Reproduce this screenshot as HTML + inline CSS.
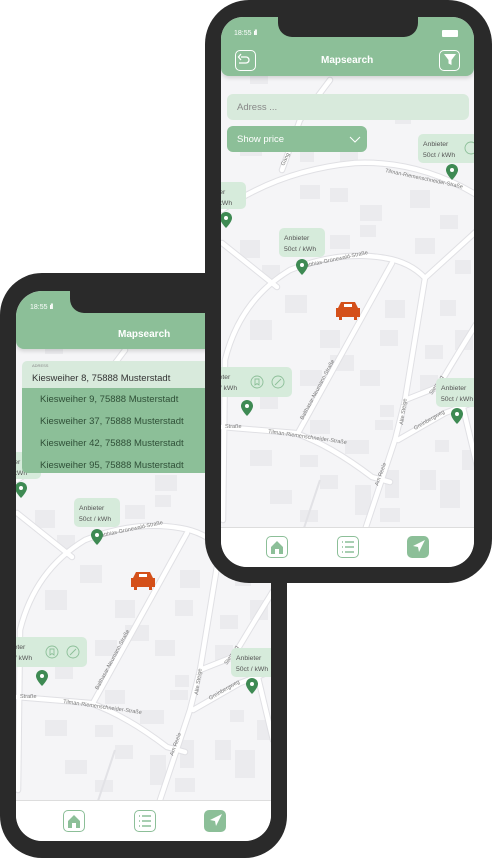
<!DOCTYPE html>
<html><head><meta charset="utf-8"><style>
*{margin:0;padding:0;box-sizing:border-box}
body{width:492px;height:858px;background:#fff;position:relative;overflow:hidden;font-family:"Liberation Sans","DejaVu Sans",sans-serif}
.frame{position:absolute;background:#2a2a2a}
.screen{position:absolute;overflow:hidden;background:#f5f5f7}
.hdr{position:absolute;left:0;top:0;background:#8cbf98;border-radius:0 0 8px 8px;box-shadow:0 2px 4px rgba(0,0,0,.15)}
.title{position:absolute;color:#fff;font-weight:bold;font-size:10px}
.time{position:absolute;color:#fff;font-size:7px}
.nav{position:absolute;left:0;background:#fff;border-top:1px solid #ddd}
.ic{position:absolute;width:22px;height:22px;border:1.3px solid #8cbf98;border-radius:5px;background:#fff}
.ic.f{background:#8cbf98}
</style></head><body>

<!-- FRONT PHONE -->
<div class="frame" style="left:0;top:273px;width:287px;height:585px;border-radius:42px"></div>
<div class="screen" style="left:16px;top:291px;width:255px;height:550px;border-radius:26px 26px 26px 26px">
<svg width="255" height="550" viewBox="221 21 255 550" style="position:absolute;left:0;top:0">
<defs><g id="ra" fill="none" stroke-linecap="round">
<path d="M223 520 L225 360 Q240 300 290 270 Q340 250 385 258 Q410 262 425 278 L480 228"/>
<path d="M222 427 L295 433 Q330 445 372 477 L390 482"/>
<path d="M298 433 L392 263"/>
<path d="M425 278 L405 400 L395 440 L365 530"/>
<path d="M398 440 L445 413 L480 400"/>
<path d="M405 400 L438 387 Q460 350 480 318"/>
<path d="M222 243 L277 287"/>
<path d="M222 210 Q280 170 355 163 Q420 160 480 197"/>
<path d="M282 170 L300 120 L330 80"/>
<path d="M460 395 L478 470"/>
</g></defs>
<g fill="#ebebee">
<rect x="240" y="140" width="22" height="16"/><rect x="300" y="185" width="20" height="14"/><rect x="330" y="188" width="18" height="14"/><rect x="360" y="205" width="22" height="16"/><rect x="410" y="190" width="20" height="18"/><rect x="440" y="215" width="18" height="14"/>
<rect x="240" y="240" width="20" height="18"/><rect x="262" y="265" width="18" height="14"/><rect x="330" y="235" width="20" height="14"/><rect x="360" y="225" width="16" height="12"/><rect x="415" y="238" width="20" height="16"/><rect x="455" y="260" width="16" height="14"/>
<rect x="285" y="295" width="22" height="18"/><rect x="250" y="320" width="22" height="20"/><rect x="320" y="330" width="20" height="18"/><rect x="330" y="355" width="24" height="16"/><rect x="385" y="300" width="20" height="18"/><rect x="380" y="330" width="18" height="16"/><rect x="440" y="300" width="16" height="16"/><rect x="455" y="330" width="18" height="20"/><rect x="425" y="345" width="18" height="14"/>
<rect x="300" y="370" width="22" height="16"/><rect x="260" y="395" width="18" height="14"/><rect x="360" y="370" width="20" height="16"/><rect x="380" y="405" width="14" height="12"/><rect x="375" y="420" width="18" height="10"/><rect x="420" y="375" width="18" height="16"/><rect x="455" y="385" width="16" height="14"/>
<rect x="310" y="420" width="20" height="14"/><rect x="345" y="440" width="24" height="14"/><rect x="250" y="450" width="22" height="16"/><rect x="300" y="455" width="18" height="12"/><rect x="320" y="475" width="18" height="14"/><rect x="270" y="490" width="22" height="14"/><rect x="355" y="485" width="16" height="30"/><rect x="385" y="470" width="14" height="28"/><rect x="420" y="470" width="16" height="20"/><rect x="435" y="440" width="14" height="12"/><rect x="440" y="480" width="20" height="28"/><rect x="462" y="450" width="14" height="20"/><rect x="300" y="510" width="18" height="12"/><rect x="380" y="508" width="20" height="14"/>
<rect x="250" y="70" width="18" height="14"/><rect x="300" y="150" width="14" height="12"/><rect x="340" y="150" width="18" height="12"/><rect x="395" y="110" width="16" height="14"/><rect x="440" y="100" width="18" height="14"/>
</g>
<use href="#ra" stroke="#e0e0e4" stroke-width="6.5"/>
<use href="#ra" stroke="#fff" stroke-width="4.5"/>
<g fill="none" stroke="#e2e2e6" stroke-width="2"><path d="M320 480 L300 540"/></g>
<g font-size="5.5" fill="#777">
<text transform="translate(302,268) rotate(-12)">Matthias-Grünewald-Straße</text>
<text transform="translate(385,172) rotate(12)">Tilman-Riemenschneider-Straße</text>
<text transform="translate(268,433) rotate(8)">Tilman-Riemenschneider-Straße</text>
<text transform="translate(303,420) rotate(-62)">Balthasar-Neumann-Straße</text>
<text transform="translate(403,425) rotate(-82)">Alte Steige</text>
<text transform="translate(378,486) rotate(-70)">Am Reele</text>
<text transform="translate(415,430) rotate(-30)">Greinbergweg</text>
<text transform="translate(432,395) rotate(-58)">Stegweg</text>
<text transform="translate(225,428)">Straße</text>
</g>
<g fill="#d6ebdb">
<rect x="418" y="134" width="60" height="29" rx="5"/><rect x="200" y="182" width="46" height="27" rx="5"/><rect x="279" y="228" width="46" height="29" rx="5"/><rect x="200" y="367" width="92" height="30" rx="5"/><rect x="436" y="378" width="46" height="29" rx="5"/>
</g>
<g font-size="6.8" fill="#555">
<text x="423" y="146">Anbieter</text><text x="423" y="157">50ct / kWh</text>
<text x="284" y="240">Anbieter</text><text x="284" y="251">50ct / kWh</text>
<text x="441" y="390">Anbieter</text><text x="441" y="401">50ct / kWh</text>
<text x="200" y="194">Anbieter</text><text x="200" y="205">50ct / kWh</text>
<text x="205" y="379">Anbieter</text><text x="205" y="390">50ct / kWh</text>
</g>
<g fill="none" stroke="#8cbf98" stroke-width="0.9"><circle cx="257" cy="382" r="6"/><circle cx="278" cy="382" r="6"/><circle cx="471" cy="148" r="6"/><path d="M255 379h4v6l-2-1.5-2 1.5z M275 385l6-6"/></g>
<g fill="#3e8a53">
<path d="M452 164a6 6 0 0 1 6 6c0 4-6 10-6 10s-6-6-6-10a6 6 0 0 1 6-6z"/>
<path d="M226 212a6 6 0 0 1 6 6c0 4-6 10-6 10s-6-6-6-10a6 6 0 0 1 6-6z"/>
<path d="M302 259a6 6 0 0 1 6 6c0 4-6 10-6 10s-6-6-6-10a6 6 0 0 1 6-6z"/>
<path d="M247 400a6 6 0 0 1 6 6c0 4-6 10-6 10s-6-6-6-10a6 6 0 0 1 6-6z"/>
<path d="M457 408a6 6 0 0 1 6 6c0 4-6 10-6 10s-6-6-6-10a6 6 0 0 1 6-6z"/>
</g>
<g fill="#fff"><circle cx="452" cy="170" r="2"/><circle cx="226" cy="218" r="2"/><circle cx="302" cy="265" r="2"/><circle cx="247" cy="406" r="2"/><circle cx="457" cy="414" r="2"/></g>
<g fill="#d4501a"><path d="M341 302h14l3 6h2v9h-3v3h-3v-3h-12v3h-3v-3h-3v-9h2z"/></g>
<rect x="344" y="304" width="8" height="3" fill="#fff"/>
</svg>
<div class="hdr" style="width:255px;height:58px"></div>
<div style="position:absolute;left:54px;top:-2px;width:260px;height:24px;background:#2a2a2a;border-radius:0 0 0 14px"></div>
<div class="time" style="left:14px;top:13px">18:55 <b style="letter-spacing:-1px">ıll</b></div>
<div class="title" style="left:102px;top:38px">Mapsearch</div>
<div style="position:absolute;left:6px;top:70px;width:250px;height:27px;background:#d8eadc;border-radius:5px 5px 0 0"></div>
<div style="position:absolute;left:16px;top:72px;font-size:4px;color:#888">ADRESS</div>
<div style="position:absolute;left:16px;top:82px;font-size:9.5px;color:#333">Kiesweiher 8, 75888 Musterstadt</div>
<div style="position:absolute;left:6px;top:97px;width:250px;height:85px;background:#8cbf98;border-radius:0 0 5px 5px;color:#2f4f37;font-size:9.5px;line-height:22px;padding:1px 0 0 18px">Kiesweiher 9, 75888 Musterstadt<br>Kiesweiher 37, 75888 Musterstadt<br>Kiesweiher 42, 75888 Musterstadt<br>Kiesweiher 95, 75888 Musterstadt</div>
<div class="nav" style="top:509px;width:255px;height:41px"></div>
<div class="ic" style="left:47px;top:519px"></div>
<div class="ic" style="left:118px;top:519px"></div>
<div class="ic f" style="left:188px;top:519px"></div>
<svg width="255" height="41" style="position:absolute;left:0;top:509px"><path d="M52 21l6-6 6 6v7h-4v-5h-4v5h-4z" fill="#8cbf98"/><g stroke="#8cbf98" stroke-width="1.5"><path d="M126 16h9M126 21h9M126 26h9M123 16h1M123 21h1M123 26h1"/></g><path d="M206 14l-12 6 5 1 1 5z" fill="#fff"/></svg>
</div>

<!-- BACK PHONE -->
<div class="frame" style="left:205px;top:0;width:287px;height:583px;border-radius:44px"></div>
<div class="screen" style="left:221px;top:17px;width:253px;height:550px;border-radius:22px 22px 26px 26px">
<svg width="253" height="550" viewBox="221 17 253 550" style="position:absolute;left:0;top:0">
<defs><g id="rb" fill="none" stroke-linecap="round">
<path d="M223 520 L225 360 Q240 300 290 270 Q340 250 385 258 Q410 262 425 278 L480 228"/>
<path d="M222 427 L295 433 Q330 445 372 477 L390 482"/>
<path d="M298 433 L392 263"/>
<path d="M425 278 L405 400 L395 440 L365 530"/>
<path d="M398 440 L445 413 L480 400"/>
<path d="M405 400 L438 387 Q460 350 480 318"/>
<path d="M222 243 L277 287"/>
<path d="M222 210 Q280 170 355 163 Q420 160 480 197"/>
<path d="M282 170 L300 120 L330 80"/>
<path d="M460 395 L478 470"/>
</g></defs>
<g fill="#ebebee">
<rect x="240" y="140" width="22" height="16"/><rect x="300" y="185" width="20" height="14"/><rect x="330" y="188" width="18" height="14"/><rect x="360" y="205" width="22" height="16"/><rect x="410" y="190" width="20" height="18"/><rect x="440" y="215" width="18" height="14"/>
<rect x="240" y="240" width="20" height="18"/><rect x="262" y="265" width="18" height="14"/><rect x="330" y="235" width="20" height="14"/><rect x="360" y="225" width="16" height="12"/><rect x="415" y="238" width="20" height="16"/><rect x="455" y="260" width="16" height="14"/>
<rect x="285" y="295" width="22" height="18"/><rect x="250" y="320" width="22" height="20"/><rect x="320" y="330" width="20" height="18"/><rect x="330" y="355" width="24" height="16"/><rect x="385" y="300" width="20" height="18"/><rect x="380" y="330" width="18" height="16"/><rect x="440" y="300" width="16" height="16"/><rect x="455" y="330" width="18" height="20"/><rect x="425" y="345" width="18" height="14"/>
<rect x="300" y="370" width="22" height="16"/><rect x="260" y="395" width="18" height="14"/><rect x="360" y="370" width="20" height="16"/><rect x="380" y="405" width="14" height="12"/><rect x="375" y="420" width="18" height="10"/><rect x="420" y="375" width="18" height="16"/><rect x="455" y="385" width="16" height="14"/>
<rect x="310" y="420" width="20" height="14"/><rect x="345" y="440" width="24" height="14"/><rect x="250" y="450" width="22" height="16"/><rect x="300" y="455" width="18" height="12"/><rect x="320" y="475" width="18" height="14"/><rect x="270" y="490" width="22" height="14"/><rect x="355" y="485" width="16" height="30"/><rect x="385" y="470" width="14" height="28"/><rect x="420" y="470" width="16" height="20"/><rect x="435" y="440" width="14" height="12"/><rect x="440" y="480" width="20" height="28"/><rect x="462" y="450" width="14" height="20"/><rect x="300" y="510" width="18" height="12"/><rect x="380" y="508" width="20" height="14"/>
<rect x="250" y="70" width="18" height="14"/><rect x="300" y="150" width="14" height="12"/><rect x="340" y="150" width="18" height="12"/><rect x="395" y="110" width="16" height="14"/><rect x="440" y="100" width="18" height="14"/>
</g>
<use href="#rb" stroke="#e0e0e4" stroke-width="6.5"/>
<use href="#rb" stroke="#fff" stroke-width="4.5"/>
<g fill="none" stroke="#e2e2e6" stroke-width="2"><path d="M320 480 L300 540"/></g>
<g font-size="5.5" fill="#777">
<text transform="translate(302,268) rotate(-12)">Matthias-Grünewald-Straße</text>
<text transform="translate(385,172) rotate(12)">Tilman-Riemenschneider-Straße</text>
<text transform="translate(268,433) rotate(8)">Tilman-Riemenschneider-Straße</text>
<text transform="translate(303,420) rotate(-62)">Balthasar-Neumann-Straße</text>
<text transform="translate(403,425) rotate(-82)">Alte Steige</text>
<text transform="translate(378,486) rotate(-70)">Am Reele</text>
<text transform="translate(415,430) rotate(-30)">Greinbergweg</text>
<text transform="translate(432,395) rotate(-58)">Stegweg</text>
<text transform="translate(225,428)">Straße</text>
<text transform="translate(284,166) rotate(-65)">Gang</text>
</g>
<g fill="#d6ebdb">
<rect x="418" y="134" width="60" height="29" rx="5"/><rect x="200" y="182" width="46" height="27" rx="5"/><rect x="279" y="228" width="46" height="29" rx="5"/><rect x="200" y="367" width="92" height="30" rx="5"/><rect x="436" y="378" width="46" height="29" rx="5"/>
</g>
<g font-size="6.8" fill="#555">
<text x="423" y="146">Anbieter</text><text x="423" y="157">50ct / kWh</text>
<text x="284" y="240">Anbieter</text><text x="284" y="251">50ct / kWh</text>
<text x="441" y="390">Anbieter</text><text x="441" y="401">50ct / kWh</text>
<text x="200" y="194">Anbieter</text><text x="200" y="205">50ct / kWh</text>
<text x="205" y="379">Anbieter</text><text x="205" y="390">50ct / kWh</text>
</g>
<g fill="none" stroke="#8cbf98" stroke-width="0.9"><circle cx="257" cy="382" r="6"/><circle cx="278" cy="382" r="6"/><circle cx="471" cy="148" r="6"/><path d="M255 379h4v6l-2-1.5-2 1.5z M275 385l6-6"/></g>
<g fill="#3e8a53">
<path d="M452 164a6 6 0 0 1 6 6c0 4-6 10-6 10s-6-6-6-10a6 6 0 0 1 6-6z"/>
<path d="M226 212a6 6 0 0 1 6 6c0 4-6 10-6 10s-6-6-6-10a6 6 0 0 1 6-6z"/>
<path d="M302 259a6 6 0 0 1 6 6c0 4-6 10-6 10s-6-6-6-10a6 6 0 0 1 6-6z"/>
<path d="M247 400a6 6 0 0 1 6 6c0 4-6 10-6 10s-6-6-6-10a6 6 0 0 1 6-6z"/>
<path d="M457 408a6 6 0 0 1 6 6c0 4-6 10-6 10s-6-6-6-10a6 6 0 0 1 6-6z"/>
</g>
<g fill="#fff"><circle cx="452" cy="170" r="2"/><circle cx="226" cy="218" r="2"/><circle cx="302" cy="265" r="2"/><circle cx="247" cy="406" r="2"/><circle cx="457" cy="414" r="2"/></g>
<g fill="#d4501a"><path d="M341 302h14l3 6h2v9h-3v3h-3v-3h-12v3h-3v-3h-3v-9h2z"/></g>
<rect x="344" y="304" width="8" height="3" fill="#fff"/>
</svg>
<div class="hdr" style="width:253px;height:59px"></div>
<div style="position:absolute;left:57px;top:-2px;width:140px;height:22px;background:#2a2a2a;border-radius:0 0 14px 14px"></div>
<div class="time" style="left:13px;top:13px">18:55 <b style="letter-spacing:-1px">ıll</b></div>
<div style="position:absolute;left:221px;top:13px;width:16px;height:7px;background:#fff;border-radius:1px"></div>
<div class="title" style="left:100px;top:38px">Mapsearch</div>
<div style="position:absolute;left:14px;top:33px;width:21px;height:21px;border:1.3px solid #fff;border-radius:5px"></div>
<svg width="253" height="60" style="position:absolute;left:0;top:0"><path d="M20 40h5a3 3 0 0 1 0 6h-7M20 37l-2.5 3 2.5 3" fill="none" stroke="#fff" stroke-width="1.3"/><path d="M223 37h12l-4.5 6v5l-3-1.5v-3.5z" fill="#fff"/></svg>
<div style="position:absolute;left:218px;top:33px;width:21px;height:21px;border:1.3px solid #fff;border-radius:5px"></div>
<div style="position:absolute;left:6px;top:77px;width:242px;height:26px;background:#d8eadc;border-radius:6px;font-size:9.5px;color:#888;padding:8px 10px">Adress ...</div>
<div style="position:absolute;left:6px;top:109px;width:140px;height:26px;background:#8cbf98;border-radius:6px;font-size:9.5px;color:#fff;padding:8px 10px">Show price</div>
<svg width="12" height="8" style="position:absolute;left:128px;top:119px"><path d="M1 1l5 5 5-5" fill="none" stroke="#fff" stroke-width="1"/></svg>
<div class="nav" style="top:510px;width:253px;height:40px"></div>
<div class="ic" style="left:45px;top:519px"></div>
<div class="ic" style="left:116px;top:519px"></div>
<div class="ic f" style="left:186px;top:519px"></div>
<svg width="253" height="40" style="position:absolute;left:0;top:509px"><path d="M50 21l6-6 6 6v7h-4v-5h-4v5h-4z" fill="#8cbf98"/><g stroke="#8cbf98" stroke-width="1.5"><path d="M124 16h9M124 21h9M124 26h9M121 16h1M121 21h1M121 26h1"/></g><path d="M204 14l-12 6 5 1 1 5z" fill="#fff"/></svg>
</div>
</body></html>
